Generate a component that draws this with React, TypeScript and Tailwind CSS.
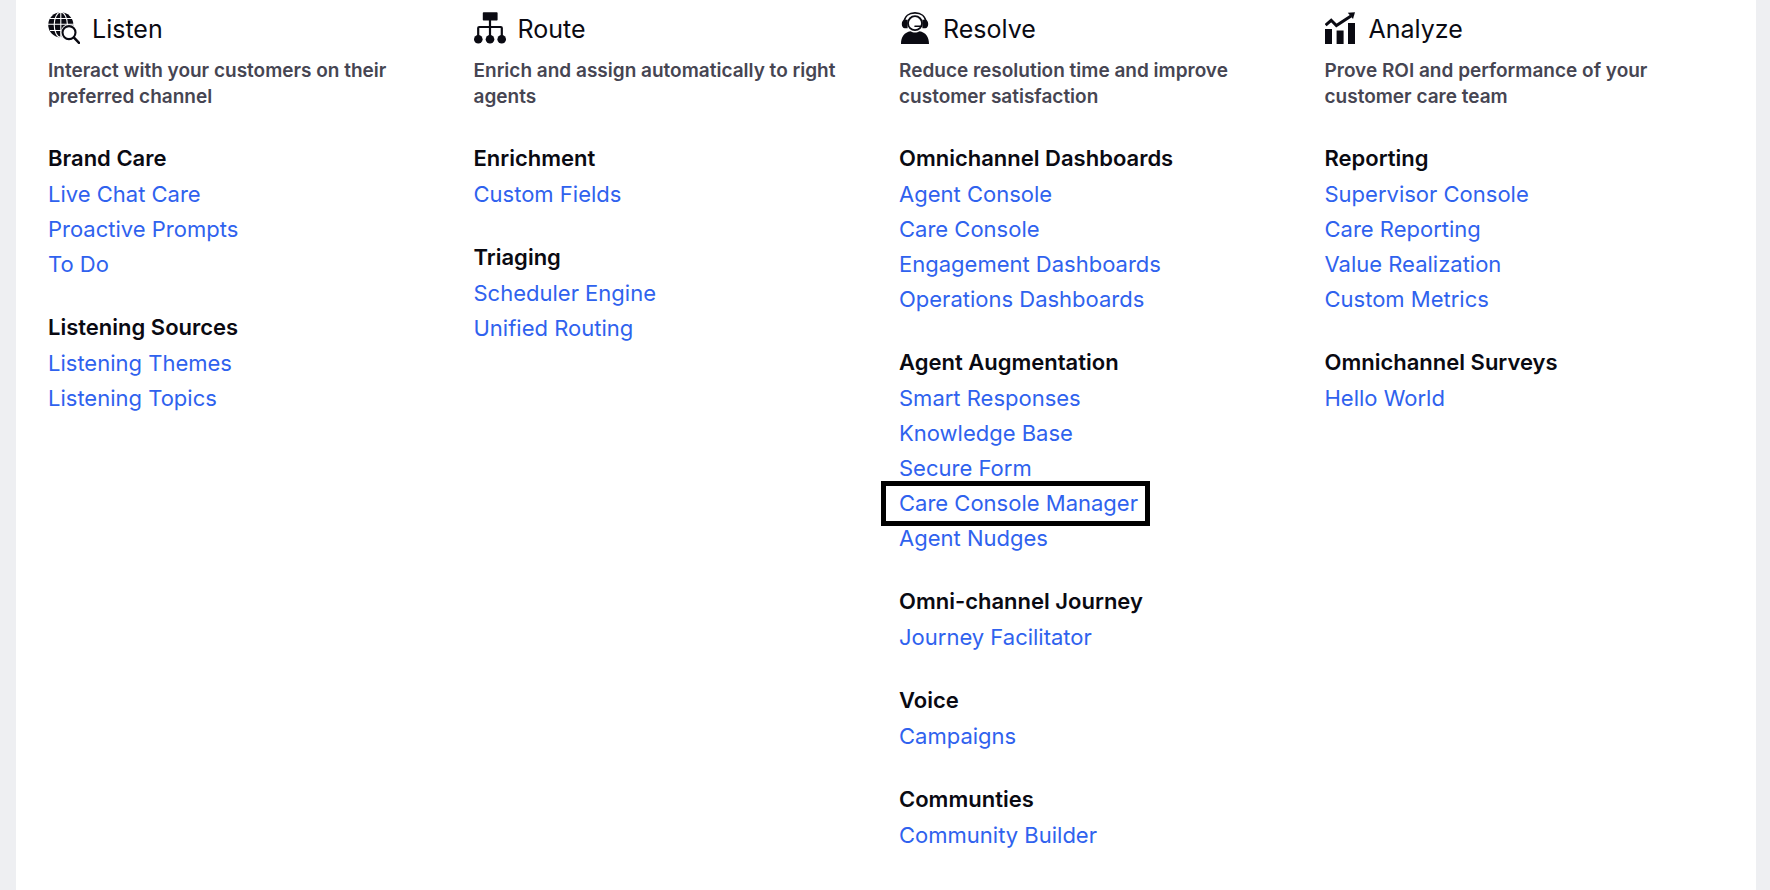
import * as React from 'react'

interface IGroup {
  title: string
  links: string[]
}

interface IColumn {
  title: string
  description: string
  icon: React.ReactNode
  groups: IGroup[]
}

const ListenIcon = () => (
  <svg viewBox="0 0 32 32" className="size-8 shrink-0" aria-hidden="true">
    <circle cx="12.8" cy="12.8" r="12.6" fill="currentColor" />
    <g fill="none" stroke="#fff" strokeWidth="1.1">
      <path d="M12.800 0v26M0 12.300h26M2 6.500h22M2 18.500h22" />
      <ellipse cx="12.8" cy="12.8" rx="6.6" ry="12.6" />
    </g>
    <circle cx="21" cy="20.6" r="8.4" fill="#fff" />
    <circle cx="21" cy="20.6" r="6.5" fill="#fff" stroke="currentColor" strokeWidth="2.1" />
    <path d="M26 25.600l5 5.200" stroke="currentColor" strokeWidth="2.5" strokeLinecap="round" />
  </svg>
)

const RouteIcon = () => (
  <svg viewBox="0 0 32 32" className="size-8 shrink-0" aria-hidden="true">
    <rect x="8.8" y="0.3" width="14.8" height="8.2" rx="0.8" fill="currentColor" />
    <path d="M16 8v18M4.200 26V16a1 1 0 0 1 1-1h21.600a1 1 0 0 1 1 1v10" fill="none" stroke="currentColor" strokeWidth="2.2" />
    <circle cx="4.3" cy="27.3" r="4.3" fill="currentColor" />
    <circle cx="16" cy="27.3" r="4.3" fill="currentColor" />
    <circle cx="27.7" cy="27.3" r="4.3" fill="currentColor" />
  </svg>
)

const ResolveIcon = () => (
  <svg viewBox="0 0 32 32" className="size-8 shrink-0" aria-hidden="true">
    <path d="M5 10C5.600 4.200 10 .9 16 .9S26.400 4.200 27 10" fill="none" stroke="currentColor" strokeWidth="1.6" />
    <circle cx="16" cy="11.2" r="7" fill="none" stroke="currentColor" strokeWidth="1.8" />
    <path d="M8.600 7.800v8.400H5.800C4 16.200 2.800 14.600 2.800 12S4 7.800 5.800 7.800zM23.400 7.800v8.400h2.800c1.800 0 3-1.600 3-4.200s-1.200-4.200-3-4.200z" fill="currentColor" />
    <path d="M16 14.300h6.500" stroke="currentColor" strokeWidth="1.6" strokeLinecap="round" />
    <path d="M2 32c0-7.500 3.500-11.500 9.500-12.700 2.500 1.600 6.500 1.600 9 0C26.500 20.500 30 24.500 30 32z" fill="currentColor" />
  </svg>
)

const AnalyzeIcon = () => (
  <svg viewBox="0 0 32 32" className="size-8 shrink-0" aria-hidden="true">
    <path d="M0 17h7v15H0zM11.600 18.500h7V32h-7zM23 11h7v21h-7z" fill="currentColor" />
    <path d="M.6 13.200l5.600-4.900 5.200 5.200L26 4" fill="none" stroke="currentColor" strokeWidth="3" />
    <path d="M22.800.8L30 .3l-2 6.700z" fill="currentColor" />
  </svg>
)

const columns: IColumn[] = [
  {
    title: 'Listen',
    description: 'Interact with your customers on their preferred channel',
    icon: <ListenIcon />,
    groups: [
      { title: 'Brand Care', links: ['Live Chat Care', 'Proactive Prompts', 'To Do'] },
      { title: 'Listening Sources', links: ['Listening Themes', 'Listening Topics'] },
    ],
  },
  {
    title: 'Route',
    description: 'Enrich and assign automatically to right agents',
    icon: <RouteIcon />,
    groups: [
      { title: 'Enrichment', links: ['Custom Fields'] },
      { title: 'Triaging', links: ['Scheduler Engine', 'Unified Routing'] },
    ],
  },
  {
    title: 'Resolve',
    description: 'Reduce resolution time and improve customer satisfaction',
    icon: <ResolveIcon />,
    groups: [
      {
        title: 'Omnichannel Dashboards',
        links: ['Agent Console', 'Care Console', 'Engagement Dashboards', 'Operations Dashboards'],
      },
      {
        title: 'Agent Augmentation',
        links: ['Smart Responses', 'Knowledge Base', 'Secure Form', 'Care Console Manager', 'Agent Nudges'],
      },
      { title: 'Omni-channel Journey', links: ['Journey Facilitator'] },
      { title: 'Voice', links: ['Campaigns'] },
      { title: 'Communties', links: ['Community Builder'] },
    ],
  },
  {
    title: 'Analyze',
    description: 'Prove ROI and performance of your customer care team',
    icon: <AnalyzeIcon />,
    groups: [
      {
        title: 'Reporting',
        links: ['Supervisor Console', 'Care Reporting', 'Value Realization', 'Custom Metrics'],
      },
      { title: 'Omnichannel Surveys', links: ['Hello World'] },
    ],
  },
]

const highlighted = 'Care Console Manager'

const LinkGroup: React.FC<{ group: IGroup }> = ({ group }) => (
  <section>
    <h3 className="text-[22px] leading-[37px] font-semibold">{group.title}</h3>
    <ul>
      {group.links.map(link => (
        <li key={link} className="text-[22px] leading-[35px] text-[#2f62ee]">
          <a href="#" className="relative inline-block align-top hover:underline">
            {link}
            {link === highlighted && (
              <span className="pointer-events-none absolute -inset-y-[5px] -right-3 -left-[18px] border-5 border-black" />
            )}
          </a>
        </li>
      ))}
    </ul>
  </section>
)

const Column: React.FC<{ column: IColumn }> = ({ column }) => (
  <div>
    <div className="flex items-start gap-3">
      {column.icon}
      <h2 className="text-[25px] leading-[35px]">{column.title}</h2>
    </div>
    <p className="mt-[11px] text-[19px] leading-[26px] font-semibold text-[#464552]">{column.description}</p>
    <div className="mt-[30px] flex flex-col gap-[27px]">
      {column.groups.map(group => (
        <LinkGroup key={group.title} group={group} />
      ))}
    </div>
  </div>
)

export default function App() {
  return (
    <div className="min-h-screen bg-[#eeeff2] pr-[14px] pl-4 font-['Inter',sans-serif] text-[#0a0a12]">
      <main className="grid min-h-screen grid-cols-4 gap-x-[26px] bg-white px-8 pt-3 pb-8">
        {columns.map(column => (
          <Column key={column.title} column={column} />
        ))}
      </main>
    </div>
  )
}
